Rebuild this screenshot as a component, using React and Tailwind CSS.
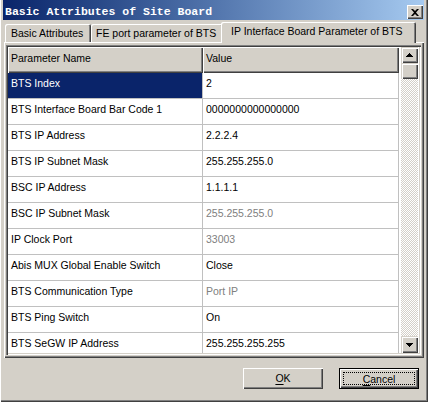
import React from 'react';

const rows = [
  { name: 'BTS Index', value: '2', selected: true },
  { name: 'BTS Interface Board Bar Code 1', value: '0000000000000000' },
  { name: 'BTS IP Address', value: '2.2.2.4' },
  { name: 'BTS IP Subnet Mask', value: '255.255.255.0' },
  { name: 'BSC IP Address', value: '1.1.1.1' },
  { name: 'BSC IP Subnet Mask', value: '255.255.255.0', dim: true },
  { name: 'IP Clock Port', value: '33003', dim: true },
  { name: 'Abis MUX Global Enable Switch', value: 'Close' },
  { name: 'BTS Communication Type', value: 'Port IP', dim: true },
  { name: 'BTS Ping Switch', value: 'On' },
  { name: 'BTS SeGW IP Address', value: '255.255.255.255' },
];

const bevel = 'shadow-[inset_1px_1px_0_#ffffff,inset_-1px_-1px_0_#404040,inset_-2px_-2px_0_#808080]';
const scrollBevel =
  'shadow-[inset_1px_1px_0_#d4d0c8,inset_2px_2px_0_#ffffff,inset_-1px_-1px_0_#404040,inset_-2px_-2px_0_#808080]';

function Arrow({ down }) {
  return (
    <svg width="7" height="4" viewBox="0 0 7 4" className={down ? 'rotate-180' : ''}>
      <path d="M3 0h1v1h1v1h1v1h1v1H0V3h1V2h1V1h1z" fill="#000" />
    </svg>
  );
}

export default function App() {
  return (
    <div
      className="w-[428px] h-[402px] bg-[#d4d0c8] flex flex-col pl-[3px] pr-[4px] overflow-hidden shadow-[inset_1px_0_0_#ffffff,inset_-1px_-1px_0_#404040,inset_-2px_-2px_0_#808080] text-[10.5px] text-black"
      style={{ fontFamily: '"Liberation Sans", Arial, sans-serif' }}
    >
      {/* Title bar */}
      <div className="h-[20px] shrink-0 flex items-end pb-[1px] pl-[2px] pr-[1px] bg-gradient-to-r from-[#0a246a] to-[#a6caf0]">
        <div
          className="flex-1 text-white font-bold text-[11.5px] leading-[13px] pb-[1px]"
          style={{ fontFamily: '"Liberation Mono", "Courier New", monospace' }}
        >
          Basic Attributes of Site Board
        </div>
        <div className={`w-[16px] h-[14px] bg-[#d4d0c8] flex items-center justify-center ${bevel}`}>
          <svg width="8" height="7" viewBox="0 0 8 7">
            <path d="M0 0h2l2 2 2-2h2L5 3.5 8 7H6L4 5 2 7H0l3-3.5z" fill="#000" />
          </svg>
        </div>
      </div>

      {/* Tabs */}
      <div className="h-[22px] shrink-0 flex items-end pl-[2px]">
        <div className="w-[86px] h-[18px] rounded-t-[2px] shadow-[inset_1px_1px_0_#ffffff,inset_-1px_0_0_#404040,inset_-2px_0_0_#808080] pl-[6px] pt-[3px] leading-[13px] whitespace-nowrap">
          Basic Attributes
        </div>
        <div className="w-[132px] h-[18px] rounded-t-[2px] shadow-[inset_1px_1px_0_#ffffff,inset_-1px_0_0_#404040,inset_-2px_0_0_#808080] pl-[5px] pt-[3px] leading-[13px] whitespace-nowrap">
          FE port parameter of BTS
        </div>
        <div className="relative z-10 -ml-[2px] -mb-[1px] w-[195px] h-[21px] bg-[#d4d0c8] rounded-t-[2px] shadow-[inset_1px_1px_0_#ffffff,inset_-1px_0_0_#404040,inset_-2px_0_0_#808080] pl-[10px] pt-[3px] leading-[13px] whitespace-nowrap">
          IP Interface Board Parameter of BTS
        </div>
      </div>

      {/* Tab panel */}
      <div className={`ml-[1px] h-[316px] shrink-0 pt-[3px] pl-[2px] pr-[3px] pb-[3px] ${bevel}`}>
        <div className="h-full flex p-[2px] bg-white shadow-[inset_1px_1px_0_#808080,inset_2px_2px_0_#404040,inset_-1px_-1px_0_#ffffff,inset_-2px_-2px_0_#d4d0c8]">
          {/* Table */}
          <div className="w-[393px] h-full overflow-hidden bg-white">
            <div className="flex h-[26px]">
              <div className={`w-[195px] h-full bg-[#d4d0c8] pl-[3px] pt-[4px] leading-[14px] ${bevel}`}>
                Parameter Name
              </div>
              <div className={`w-[196px] h-full bg-[#d4d0c8] pl-[3px] pt-[4px] leading-[14px] ${bevel}`}>
                Value
              </div>
            </div>
            {rows.map((r) => (
              <div key={r.name} className="flex h-[26px]">
                <div
                  className={`w-[195px] h-full border-b border-r border-[#c0c0c0] pl-[3px] pt-[3px] leading-[14px] ${
                    r.selected ? 'bg-[#0a246a] text-white' : ''
                  }`}
                >
                  {r.name}
                </div>
                <div
                  className={`w-[196px] h-full border-b border-r border-[#c0c0c0] pl-[3px] pt-[3px] leading-[14px] ${
                    r.dim ? 'text-[#808080]' : ''
                  }`}
                >
                  {r.value}
                </div>
              </div>
            ))}
          </div>

          {/* Scrollbar */}
          <div className="w-[17px] h-full flex flex-col bg-[repeating-conic-gradient(#d4d0c8_0_25%,#ffffff_0_50%)] bg-[length:2px_2px]">
            <div className={`h-[16px] bg-[#d4d0c8] flex items-center justify-center ${scrollBevel}`}>
              <Arrow />
            </div>
            <div className={`h-[16px] bg-[#d4d0c8] ${scrollBevel}`} />
            <div className="flex-1" />
            <div className={`h-[17px] bg-[#d4d0c8] flex items-center justify-center ${scrollBevel}`}>
              <Arrow down />
            </div>
          </div>
        </div>
      </div>

      {/* Buttons */}
      <div className="flex justify-end gap-[16px] pr-[5px] pt-[10px]">
        <button className={`w-[80px] h-[21px] bg-[#d4d0c8] ${bevel}`}>
          <span className="underline underline-offset-[2px]">O</span>K
        </button>
        <button className="w-[80px] h-[21px] bg-[#d4d0c8] border border-black">
          <div className={`w-full h-full p-[3px] ${bevel}`}>
            <div className="w-full h-full border border-dotted border-black flex items-center justify-center leading-[12px]">
              <span>
                <span className="underline underline-offset-[2px]">C</span>ancel
              </span>
            </div>
          </div>
        </button>
      </div>
    </div>
  );
}
